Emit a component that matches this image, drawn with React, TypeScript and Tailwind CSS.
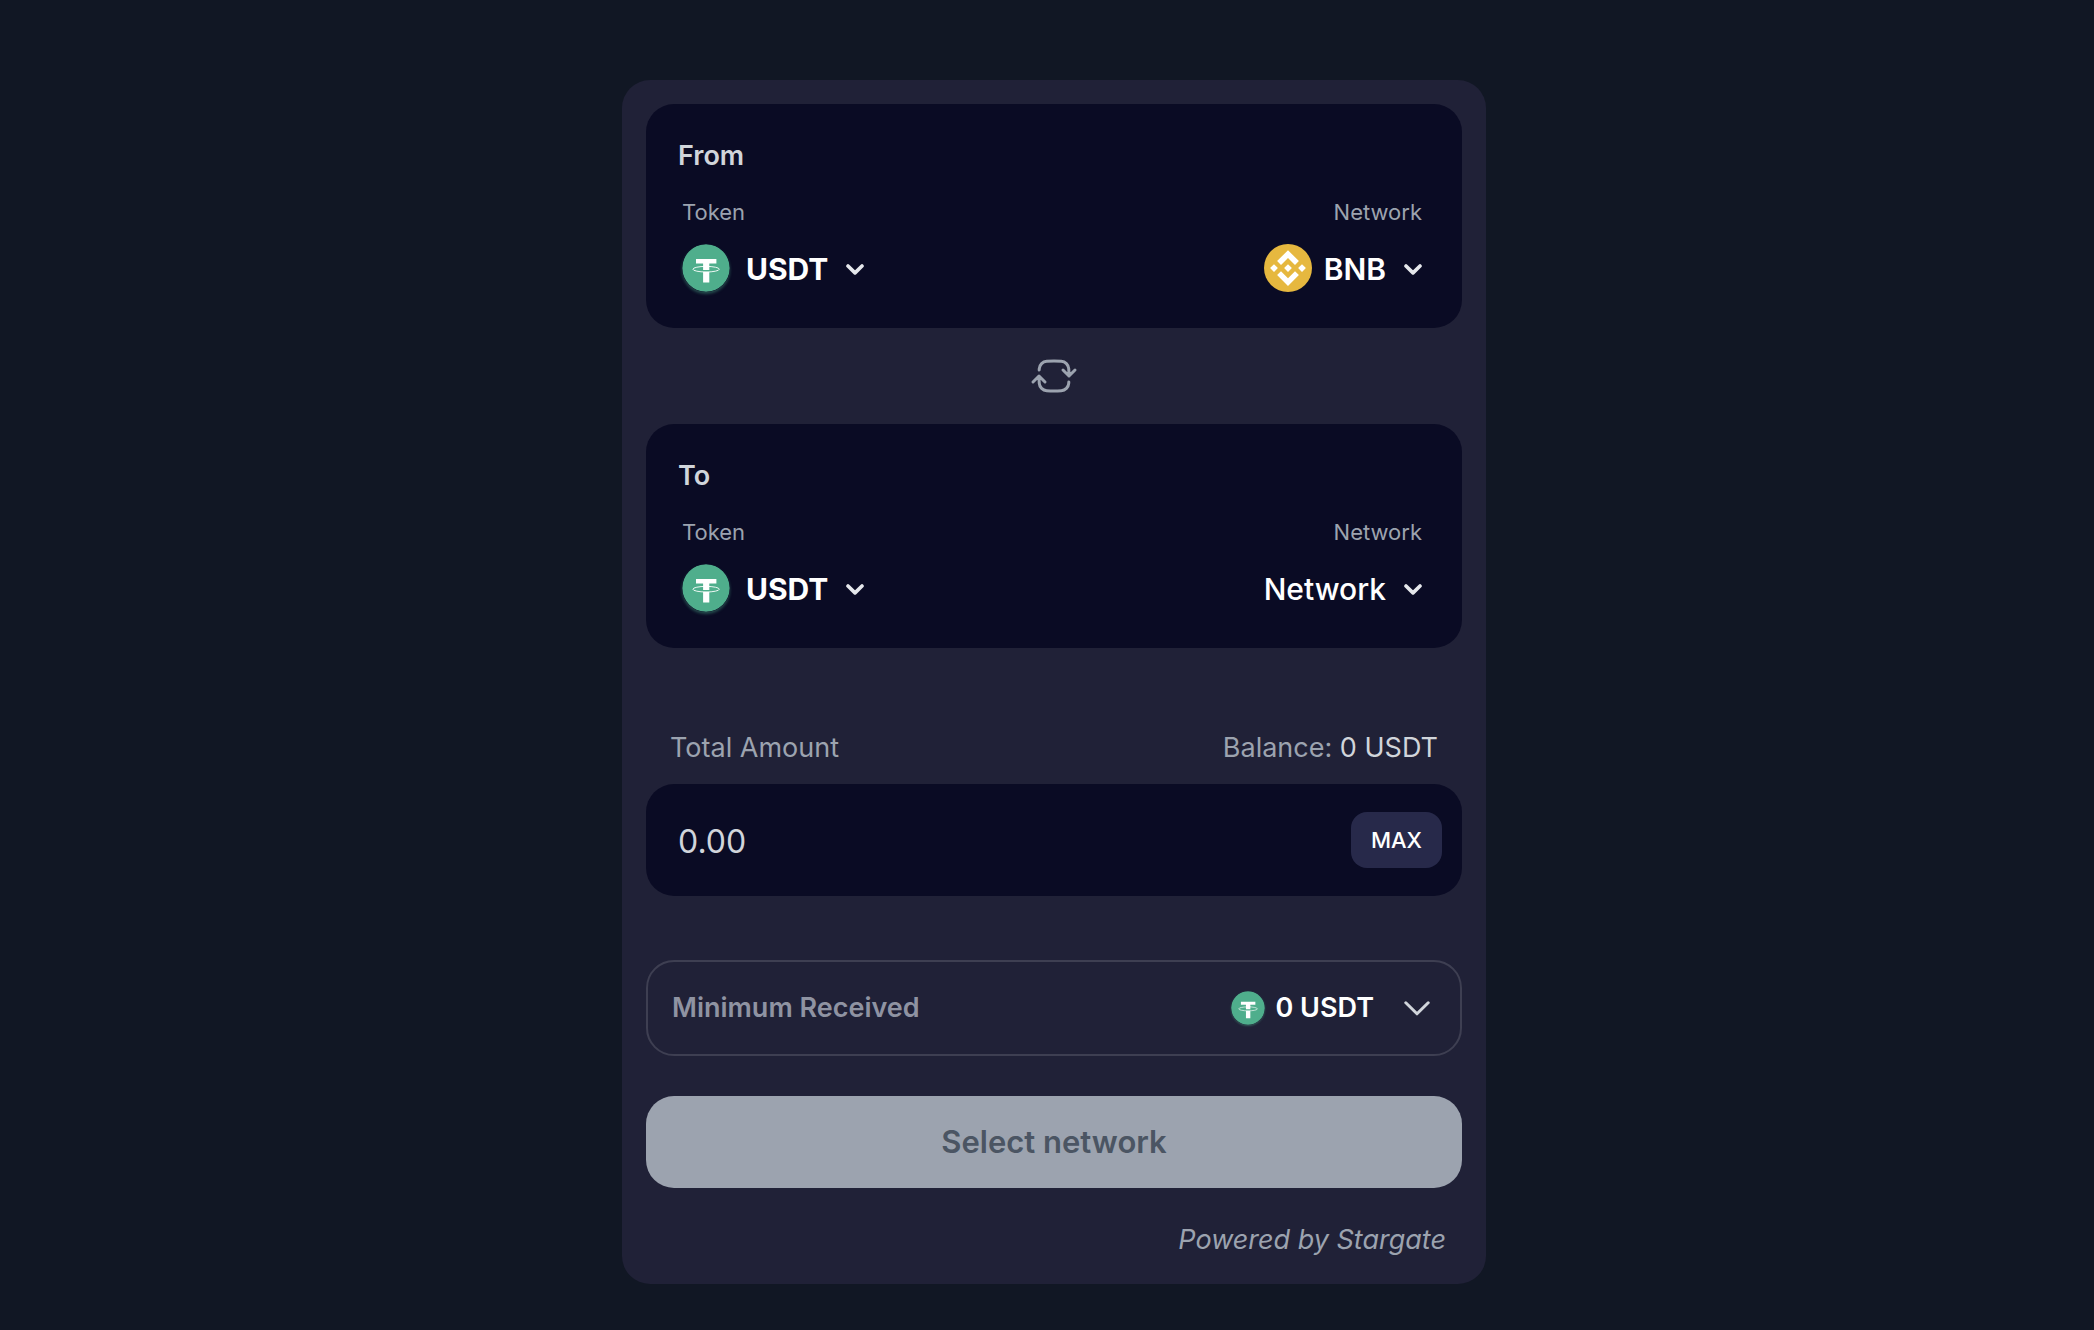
import { useState } from "react";

function TetherIcon({ className }: { className: string }) {
  return (
    <svg viewBox="0 0 48 48" className={className} aria-hidden="true">
      <circle cx="24" cy="24" r="23.7" fill="#4fae8c" />
      <path d="M14 15h20.4v4.4h-7.1v3.2h-6.2v-3.2H14zM21.1 27.6h6.2v10.9h-6.2z" fill="#fff" />
      <path d="M21.1 22h6.2v4h-6.2z" fill="#fff" />
      <ellipse cx="24.1" cy="25.2" rx="13.2" ry="2.8" fill="none" stroke="#fff" strokeWidth="0.9" />
      <path d="M20.9 26.2h6.6v1h-6.6z" fill="#4fae8c" />
    </svg>
  );
}

function BnbIcon() {
  return (
    <svg viewBox="0 0 48 48" className="size-12" aria-hidden="true">
      <circle cx="24" cy="24" r="24" fill="#e6b83f" />
      <g fill="#fff">
        <path d="M24 6.2 34.9 17.1 31 21 24 14 17 21 13.1 17.1z" />
        <path d="M24 42 13.1 31.1 17 27.2 24 34.2 31 27.2 34.9 31.1z" />
        <path d="m24 20.2 3.9 3.9-3.9 3.9-3.9-3.9z" />
        <path d="m10 20.2 3.9 3.9-3.9 3.9-3.9-3.9z" />
        <path d="m38 20.2 3.9 3.9-3.9 3.9-3.9-3.9z" />
      </g>
    </svg>
  );
}

function SmallChevron() {
  return (
    <svg viewBox="0 0 18 12" className="pointer-events-none -ml-[18px] mt-1 h-3 w-[18px]" fill="none" aria-hidden="true">
      <path d="M2 2 9 8.9 16 2" stroke="#e5e7eb" strokeWidth="3.6" strokeLinecap="round" strokeLinejoin="round" />
    </svg>
  );
}

function Picker({ id, options, weight }: { id: string; options: string[]; weight: string }) {
  return (
    <span className="flex items-center">
      <select
        id={id}
        className={`field-sizing-content cursor-pointer appearance-none bg-transparent pt-0.5 pr-9 text-[30px] leading-10 text-white ${weight}`}
      >
        {options.map((o) => (
          <option key={o} className="bg-[#0a0b24]">
            {o}
          </option>
        ))}
      </select>
      <SmallChevron />
    </span>
  );
}

function AssetPanel({ title, networks }: { title: string; networks: string[] }) {
  const id = title.toLowerCase();
  const hasNetwork = networks[0] === "BNB";
  return (
    <section className="rounded-[28px] bg-[#0a0b24] px-8 pt-8 pb-9">
      <h2 className="text-[27px] leading-10 font-semibold text-[#d1d5db]">{title}</h2>
      <div className="mt-4 flex justify-between pr-2 pl-1">
        <div className="flex flex-col items-start">
          <label htmlFor={`${id}-token`} className="text-[22px] leading-10 text-[#9ca3af]">
            Token
          </label>
          <div className="mt-3 flex h-12 items-center gap-4">
            <TetherIcon className="size-12 rounded-full shadow-[0_2px_3px_#4fae8c66]" />
            <Picker id={`${id}-token`} options={["USDT", "USDC"]} weight="font-bold" />
          </div>
        </div>
        <div className="flex flex-col items-end">
          <label htmlFor={`${id}-network`} className="text-[22px] leading-10 text-[#9ca3af]">
            Network
          </label>
          <div className="mt-3 flex h-12 items-center gap-3">
            {hasNetwork && <BnbIcon />}
            <Picker
              id={`${id}-network`}
              options={networks}
              weight={hasNetwork ? "font-semibold" : "font-medium"}
            />
          </div>
        </div>
      </div>
    </section>
  );
}

export default function App() {
  const [amount, setAmount] = useState("");
  return (
    <main className="flex min-h-screen items-start justify-center bg-[#111724] pt-20 pb-11 pl-3.5 font-['Inter',sans-serif]">
      <form className="w-full max-w-[864px] rounded-[28px] bg-[#202137] p-6">
        <AssetPanel title="From" networks={["BNB", "Ethereum"]} />

        <button type="button" aria-label="Swap direction" className="mx-auto my-6 block text-[#9ca3af]">
          <svg viewBox="0 0 24 24" className="size-12" fill="none" stroke="currentColor" strokeWidth="1.5" strokeLinecap="round" strokeLinejoin="round" aria-hidden="true">
            <path d="M19.5 12c0-1.232-.046-2.453-.138-3.662a4.006 4.006 0 0 0-3.7-3.7 48.678 48.678 0 0 0-7.324 0 4.006 4.006 0 0 0-3.7 3.7c-.017.22-.032.441-.046.662M19.5 12l3-3m-3 3-3-3m-12 3c0 1.232.046 2.453.138 3.662a4.006 4.006 0 0 0 3.7 3.7 48.656 48.656 0 0 0 7.324 0 4.006 4.006 0 0 0 3.7-3.7c.017-.22.032-.441.046-.662M4.5 12l3 3m-3-3-3 3" />
          </svg>
        </button>

        <AssetPanel title="To" networks={["Network", "BNB", "Ethereum"]} />

        <div className="mt-20 flex justify-between px-6 text-[27px] leading-10 text-[#9ca3af]">
          <label htmlFor="amount">Total Amount</label>
          <p>
            Balance: <span className="text-[#d1d5db]">0 USDT</span>
          </p>
        </div>
        <div className="mt-4 flex items-center rounded-[28px] bg-[#0a0b24] py-7 pr-5 pl-8">
          <input
            id="amount"
            type="text"
            inputMode="decimal"
            placeholder="0.00"
            value={amount}
            onChange={(e) => setAmount(e.target.value)}
            className="h-14 min-w-0 flex-1 bg-transparent pt-0.5 text-[32px] text-[#d1d5db] outline-none placeholder:text-[#d1d5db]"
          />
          <button type="button" className="h-14 rounded-2xl bg-[#27294a] px-5 text-[22px] font-medium text-white">
            MAX
          </button>
        </div>

        <button
          type="button"
          aria-expanded="false"
          className="mt-16 flex h-24 w-full items-center rounded-[28px] border-2 border-[#3e3f52] pr-[30px] pl-6 text-[27px] leading-10 font-semibold"
        >
          <span className="flex-1 text-left text-[#8f93a2]">Minimum Received</span>
          <TetherIcon className="size-[34px] rounded-full shadow-[0_1px_2px_#4fae8c66]" />
          <span className="ml-2.5 text-white">0 USDT</span>
          <svg viewBox="0 0 26 15" className="ml-[30px] h-[15px] w-[26px]" fill="none" aria-hidden="true">
            <path d="M1.8 1.8 13 12.8 24.2 1.8" stroke="#d1d5db" strokeWidth="3" strokeLinecap="round" strokeLinejoin="round" />
          </svg>
        </button>

        <button type="submit" disabled className="mt-10 h-[92px] w-full rounded-[28px] bg-[#9ca3af] text-[31px] font-semibold text-[#4b5563]">
          Select network
        </button>

        <p className="mt-8 pr-4 text-right text-[27px] leading-10 text-[#9ca3af] italic">Powered by Stargate</p>
      </form>
    </main>
  );
}
